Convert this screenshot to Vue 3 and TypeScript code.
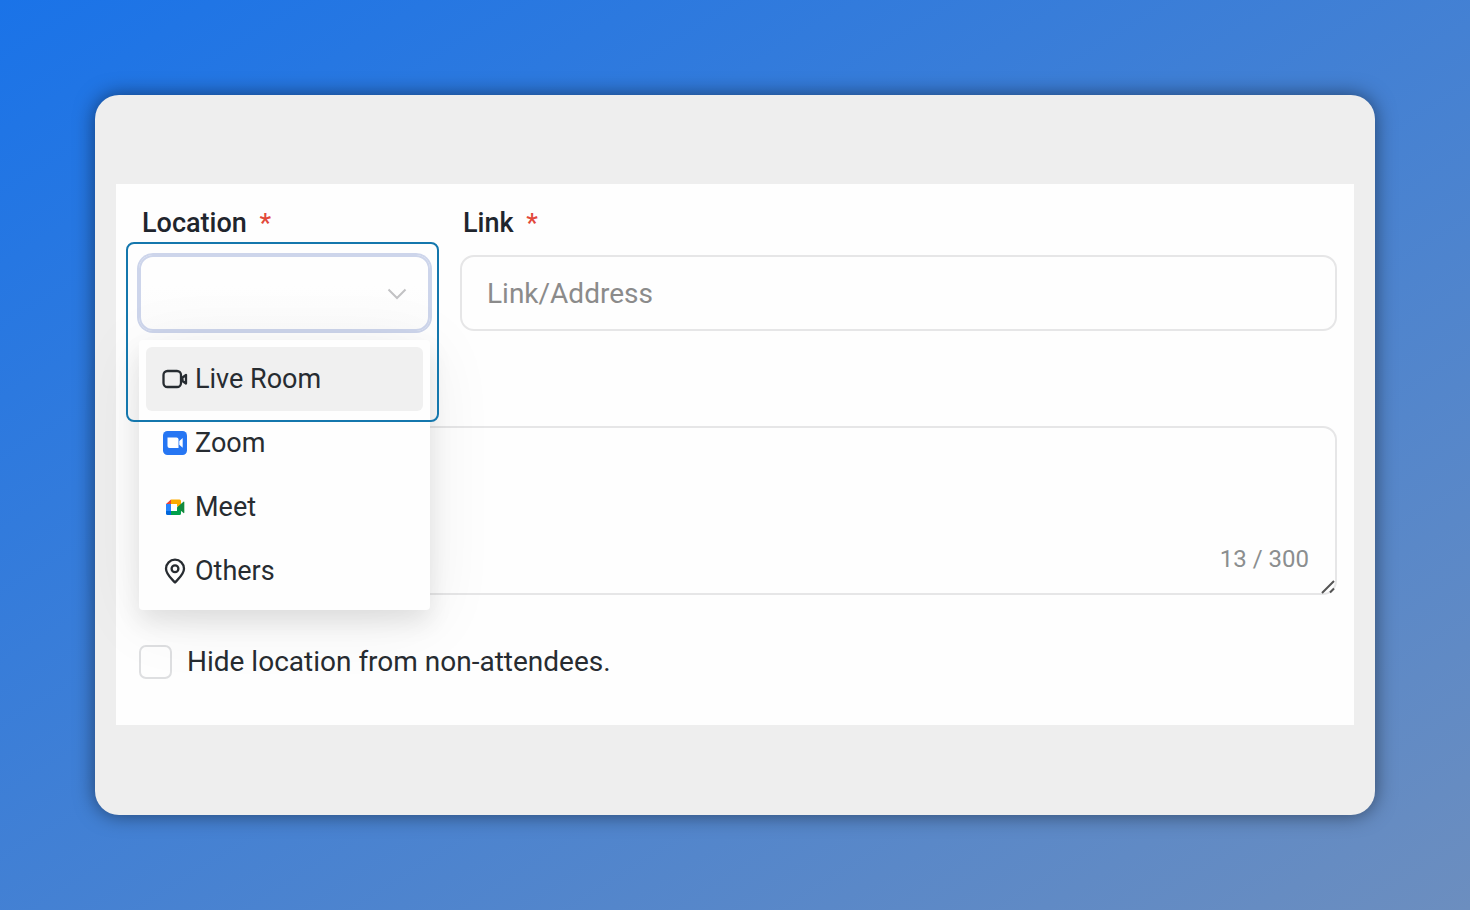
<script setup lang="ts">
import { ref } from 'vue'

type Icon = 'camera' | 'zoom' | 'meet' | 'pin'

interface LocationOption {
  label: string
  icon: Icon
}

const options: LocationOption[] = [
  { label: 'Live Room', icon: 'camera' },
  { label: 'Zoom', icon: 'zoom' },
  { label: 'Meet', icon: 'meet' },
  { label: 'Others', icon: 'pin' },
]

const location = ref('')
const active = ref('Live Room')
const link = ref('')
const hidden = ref(false)
const used = 13
const limit = 300
</script>

<template>
  <main class="stage">
    <section class="frame">
      <form class="form" @submit.prevent>
        <div class="row">
          <div class="field location">
            <label class="label" for="location">Location <span class="required">*</span></label>
            <div class="select-wrap">
              <select id="location" v-model="location" class="control select">
                <option value=""></option>
                <option v-for="o in options" :key="o.label" :value="o.label">{{ o.label }}</option>
              </select>
              <svg class="chevron" viewBox="0 0 20 12" aria-hidden="true">
                <path d="M1.5 1.5 10 10l8.500-8.500" />
              </svg>
              <div class="menu">
                <button
                  v-for="o in options"
                  :key="o.label"
                  type="button"
                  class="option"
                  :class="{ active: o.label === active }"
                  @mouseenter="active = o.label"
                  @click="location = o.label"
                >
                  <svg v-if="o.icon === 'camera'" class="icon line" viewBox="0 0 26 26" aria-hidden="true">
                    <rect x="1.500" y="5" width="17.500" height="16" rx="4" />
                    <path d="M20.500 11.500 24 9v8.500l-3.500-2.500z" />
                  </svg>
                  <svg v-else-if="o.icon === 'zoom'" class="icon" viewBox="0 0 26 26" aria-hidden="true">
                    <rect x="1" y="1" width="24" height="24" rx="4.500" fill="#2676f3" />
                    <path d="M5.500 7.500h9a2 2 0 0 1 2 2v8.500h-9a2 2 0 0 1-2-2z" fill="#fff" />
                    <path d="M17.300 11 20.700 8v9.800l-3.400-3z" fill="#fff" />
                  </svg>
                  <svg v-else-if="o.icon === 'meet'" class="icon" viewBox="0 0 26 26" aria-hidden="true">
                    <path d="M9 5.500V10H4z" fill="#ea4335" />
                    <path d="M4 10h5v7H4z" fill="#2684fc" />
                    <path d="M4 17h5v4H5.500A1.500 1.500 0 0 1 4 19.500z" fill="#0066da" />
                    <path d="M9 5.500h8.500A1.500 1.500 0 0 1 19 7v6.500l-4-1V10H9z" fill="#fbab00" />
                    <path d="M9 17h6v-3.500l4-1.500v7.500a1.500 1.500 0 0 1-1.500 1.500H9z" fill="#00a04b" />
                    <path d="m15 13.300 6.500-5.600q.8-.5.800.5v10.300q0 1-.8.500z" fill="#128a3e" />
                  </svg>
                  <svg v-else class="icon line" viewBox="0 0 26 26" aria-hidden="true">
                    <path d="M13 24.500C10 21 4 16.500 4 10.700a9 9 0 0 1 18 0C22 16.500 16 21 13 24.500z" />
                    <circle cx="13" cy="10.800" r="3.400" />
                  </svg>
                  <span>{{ o.label }}</span>
                </button>
              </div>
            </div>
            <div class="highlight"></div>
          </div>

          <div class="field">
            <label class="label" for="link">Link <span class="required">*</span></label>
            <input id="link" v-model="link" class="control" type="text" placeholder="Link/Address" />
          </div>
        </div>

        <div class="details">
          <textarea class="control area" aria-labelledby="count"></textarea>
          <span id="count" class="count">{{ used }} / {{ limit }}</span>
          <svg class="grip" viewBox="0 0 16 16" aria-hidden="true">
            <path d="M2 14 14 2M10 13.500l4-4" />
          </svg>
        </div>

        <label class="check">
          <input v-model="hidden" type="checkbox" />
          <span>Hide location from non-attendees.</span>
        </label>
      </form>
    </section>
  </main>
</template>

<style>
body {
  margin: 0;
}
</style>

<style scoped>
* {
  box-sizing: border-box;
}
.stage {
  display: flex;
  min-height: 100vh;
  padding: 95px;
  background: linear-gradient(to bottom right, #1a73e8, #6c8ebf);
  font-family: Roboto, 'Liberation Sans', sans-serif;
  font-size: 28px;
  color: #272c31;
}
.frame {
  flex: 1;
  min-width: 0;
  padding: 89px 21px;
  border-radius: 24px;
  background: #eeeeee;
  box-shadow: 0 0 20px rgba(0, 0, 0, 0.5);
}
.form {
  padding: 23px 17px 46px 23px;
  background: #fefefe;
}
.row {
  display: grid;
  grid-template-columns: 291px minmax(0, 1fr);
  gap: 30px;
}
.field {
  display: flex;
  flex-direction: column;
  gap: 16px;
}
.location {
  position: relative;
  z-index: 1;
}
.label {
  padding-left: 3px;
  font-size: 27px;
  font-weight: 500;
  line-height: 32px;
  color: #1f252d;
}
.required {
  margin-left: 6px;
  font-size: 26px;
  color: #e2493b;
}
.control {
  display: block;
  width: 100%;
  height: 76px;
  padding: 0 25px;
  border: 2px solid #e6e6e7;
  border-radius: 14px;
  outline: none;
  background: #fefefe;
  font: inherit;
  color: inherit;
}
.control::placeholder {
  color: #8b8b8b;
  opacity: 1;
}
.select-wrap {
  position: relative;
}
.select {
  appearance: none;
  border-color: #cdd5eb;
  background: linear-gradient(#fefefe 40%, #fcfcfc);
  box-shadow: 0 0 0 2px #cdd5eb;
}
.chevron {
  position: absolute;
  top: 33px;
  right: 23px;
  width: 20px;
  height: 12px;
  fill: none;
  stroke: #c2c2c4;
  stroke-width: 2;
  pointer-events: none;
}
.menu {
  position: absolute;
  top: 85px;
  left: 0;
  width: 100%;
  padding: 7px;
  border-radius: 4px;
  background: #fefefe;
  box-shadow: 0 12px 24px rgba(0, 0, 0, 0.09), 0 10px 70px rgba(0, 0, 0, 0.07);
}
.option {
  display: flex;
  align-items: center;
  gap: 7px;
  width: 100%;
  height: 64px;
  padding: 0 16px;
  border: 0;
  border-radius: 6px;
  background: none;
  font: inherit;
  font-size: 27px;
  color: inherit;
  text-align: left;
}
.option.active {
  background: #f0f0f0;
}
.icon {
  flex: none;
  width: 26px;
  height: 26px;
}
.line {
  fill: none;
  stroke: #272c31;
  stroke-width: 2.300;
  stroke-linejoin: round;
}
.highlight {
  position: absolute;
  top: 35px;
  left: -13px;
  width: 313px;
  height: 180px;
  border: 2px solid #1477ad;
  border-radius: 8px;
  pointer-events: none;
}
.details {
  position: relative;
  margin-top: 95px;
}
.area {
  height: 169px;
  padding: 20px 25px;
  resize: none;
}
.count {
  position: absolute;
  right: 28px;
  bottom: 20px;
  font-size: 24px;
  line-height: 32px;
  color: #8b8e8f;
}
.grip {
  position: absolute;
  right: 1px;
  bottom: 0;
  width: 16px;
  height: 16px;
  fill: none;
  stroke: #555555;
  stroke-width: 2;
}
.check {
  display: flex;
  align-items: center;
  gap: 15px;
  width: fit-content;
  margin-top: 50px;
  line-height: 34px;
}
.check input {
  appearance: none;
  width: 33px;
  height: 34px;
  margin: 0;
  border: 2px solid #dedfe1;
  border-radius: 7px;
  background: #fefefe;
}
.check input:checked {
  background: #2676f3;
}
</style>
